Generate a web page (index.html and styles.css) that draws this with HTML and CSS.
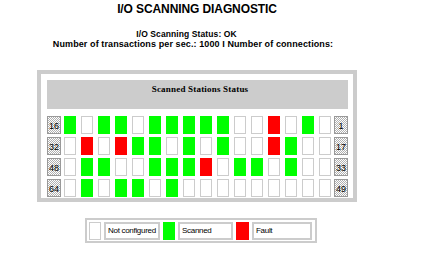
FILE: index.html
```html
<!DOCTYPE html>
<html lang="en">
<head>
    <meta charset="UTF-8">
    <title>I/O Scanning Diagnostic</title>
    <link rel="stylesheet" href="styles.css">
</head>
<body>
    <div class="page">
        <h1>I/O SCANNING DIAGNOSTIC</h1>

        <div class="info">
            <div class="status">I/O Scanning Status: OK</div>
            <div class="counts">Number of transactions per sec.: 1000 I Number of connections:</div>
        </div>

        <div class="stations">
            <div class="stations-head">Scanned Stations Status</div>

            <div class="grid">
                <div class="row">
                    <span class="num">16</span>
                    <span class="st on"></span><span class="st"></span><span class="st on"></span><span class="st on"></span>
                    <span class="st"></span><span class="st on"></span><span class="st on"></span><span class="st on"></span>
                    <span class="st on"></span><span class="st on"></span><span class="st"></span><span class="st"></span>
                    <span class="st fault"></span><span class="st"></span><span class="st on"></span><span class="st"></span>
                    <span class="num">1</span>
                </div>
                <div class="row">
                    <span class="num">32</span>
                    <span class="st"></span><span class="st fault"></span><span class="st"></span><span class="st fault"></span>
                    <span class="st on"></span><span class="st on"></span><span class="st"></span><span class="st on"></span>
                    <span class="st"></span><span class="st on"></span><span class="st"></span><span class="st"></span>
                    <span class="st fault"></span><span class="st on"></span><span class="st"></span><span class="st"></span>
                    <span class="num">17</span>
                </div>
                <div class="row">
                    <span class="num">48</span>
                    <span class="st"></span><span class="st on"></span><span class="st on"></span><span class="st"></span>
                    <span class="st"></span><span class="st on"></span><span class="st on"></span><span class="st on"></span>
                    <span class="st fault"></span><span class="st"></span><span class="st on"></span><span class="st on"></span>
                    <span class="st"></span><span class="st on"></span><span class="st"></span><span class="st"></span>
                    <span class="num">33</span>
                </div>
                <div class="row">
                    <span class="num">64</span>
                    <span class="st"></span><span class="st on"></span><span class="st"></span><span class="st on"></span>
                    <span class="st on"></span><span class="st"></span><span class="st on"></span><span class="st"></span>
                    <span class="st"></span><span class="st"></span><span class="st"></span><span class="st"></span>
                    <span class="st"></span><span class="st"></span><span class="st"></span><span class="st"></span>
                    <span class="num">49</span>
                </div>
            </div>
        </div>

        <div class="legend-wrap">
            <div class="legend">
                <span class="st"></span>
                <span class="legend-text w-not">Not configured</span>
                <span class="st on"></span>
                <span class="legend-text w-scan">Scanned</span>
                <span class="st fault wide"></span>
                <span class="legend-text w-fault">Fault</span>
            </div>
        </div>
    </div>
</body>
</html>
```

FILE: styles.css
```css
body {
    margin: 0;
    background: #fff;
    font-family: "Liberation Sans", Arial, sans-serif;
    color: #000;
}
.page {
    width: 394px;
}
h1 {
    margin: 0;
    padding-top: 2px;
    font-size: 12px;
    line-height: 14px;
    font-weight: bold;
    text-align: center;
    letter-spacing: -0.1px;
}
.info {
    margin-top: 13px;
    font-size: 9px;
    line-height: 10px;
    font-weight: bold;
    text-align: center;
    white-space: nowrap;
}
.status {
    font-size: 8.5px;
    letter-spacing: 0.1px;
    padding-right: 21px;
}
.counts {
    letter-spacing: 0.1px;
    padding-right: 8px;
}
.stations {
    width: 320px;
    box-sizing: border-box;
    margin: 21px auto 0;
    border: 4px solid #ccc;
    padding: 6px 5px 1px 6px;
}
.stations-head {
    height: 29px;
    background: #ccc;
    font-family: "Liberation Serif", "Times New Roman", serif;
    font-size: 9px;
    font-weight: bold;
    line-height: 18px;
    letter-spacing: 0.2px;
    text-align: center;
    padding-left: 5px;
}
.grid {
    margin-top: 7px;
    display: flex;
    flex-direction: column;
    gap: 3px;
}
.row {
    display: flex;
    gap: 5px;
}
.st {
    display: block;
    width: 12px;
    height: 18px;
    box-sizing: border-box;
    border: 1px solid #ccc;
    background: #fff;
}
.st.on {
    background: #00ff00;
    border-color: #00ff00;
}
.st.fault {
    background: #ff0000;
    border-color: #ff0000;
}
.num {
    display: block;
    width: 14px;
    height: 18px;
    box-sizing: border-box;
    border: 1px solid #999;
    background: repeating-conic-gradient(#b0b0b0 0 25%, #fff 0 50%) 0 0 / 2px 2px;
    font-size: 9px;
    line-height: 18px;
    text-align: center;
}
.num:first-child {
    margin-right: -2px;
}
.num:last-child {
    margin-left: -2px;
}
.legend-wrap {
    margin-top: 16px;
    padding-left: 8px;
    display: flex;
    justify-content: center;
}
.legend {
    width: 232px;
    height: 25px;
    box-sizing: border-box;
    border: 2px solid #ccc;
    padding: 2px 0 0 2px;
    display: flex;
    gap: 3px;
}
.legend .wide {
    width: 13px;
}
.legend-text {
    display: block;
    height: 18px;
    box-sizing: border-box;
    border: 2px solid #ccc;
    font-size: 8px;
    line-height: 14px;
    letter-spacing: -0.3px;
    padding-left: 2px;
    white-space: nowrap;
    overflow: hidden;
}
.w-not {
    width: 56px;
}
.w-scan {
    width: 55px;
}
.w-fault {
    width: 60px;
}
```
